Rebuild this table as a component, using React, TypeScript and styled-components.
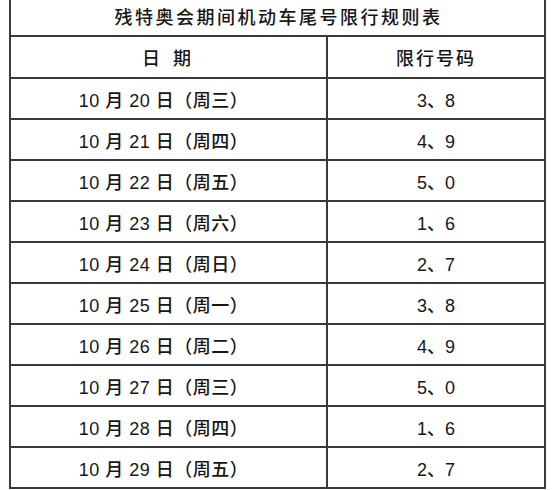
import React from 'react'
import styled, { createGlobalStyle } from 'styled-components'

const GlobalStyle = createGlobalStyle`
  html, body {
    margin: 0;
    padding: 0;
    background: #ffffff;
  }
  body {
    font-family: "Liberation Sans", "Noto Sans CJK SC", sans-serif;
    color: #161616;
  }
`

const lineColor = '#3a3a3a'

const Page = styled.div`
  width: 555px;
  height: 490px;
  overflow: hidden;
  padding-left: 9px;
  box-sizing: border-box;
`

const Table = styled.div`
  width: 537px;
  box-sizing: border-box;
  border-left: 2px solid ${lineColor};
  border-right: 2px solid ${lineColor};
  border-bottom: 2px solid ${lineColor};
  display: grid;
  grid-template-columns: 317px 1fr;
`

const Title = styled.div`
  grid-column: 1 / span 2;
  height: 35px;
  display: flex;
  align-items: center;
  justify-content: center;
  padding-bottom: 3px;
  box-sizing: border-box;
  font-size: 18px;
  font-weight: 500;
  letter-spacing: 2.5px;
  padding-left: 2px;
`

const Cell = styled.div<{ $left?: boolean; $h: number }>`
  height: ${(p) => p.$h}px;
  box-sizing: border-box;
  border-top: 2px solid ${lineColor};
  border-right: ${(p) => (p.$left ? `2px solid ${lineColor}` : 'none')};
  display: flex;
  align-items: center;
  justify-content: center;
  font-size: 18px;
  font-weight: 500;
  white-space: pre;
`

const HeadText = styled.span<{ $spread?: number }>`
  letter-spacing: ${(p) => p.$spread ?? 2}px;
`

const DateText = styled.span`
  margin-right: 10px;
  letter-spacing: 0.5px;
`

const rows: [string, string, string][] = [
  ['20', '三', '3、8'],
  ['21', '四', '4、9'],
  ['22', '五', '5、0'],
  ['23', '六', '1、6'],
  ['24', '日', '2、7'],
  ['25', '一', '3、8'],
  ['26', '二', '4、9'],
  ['27', '三', '5、0'],
  ['28', '四', '1、6'],
  ['29', '五', '2、7'],
]

const App: React.FC = () => {
  return (
    <Page>
      <GlobalStyle />
      <Table>
        <Title>残特奥会期间机动车尾号限行规则表</Title>
        <Cell $left $h={42}>
          <HeadText $spread={4}>日 期</HeadText>
        </Cell>
        <Cell $h={42}>
          <HeadText>限行号码</HeadText>
        </Cell>
        {rows.map(([day, week, nums]) => (
          <React.Fragment key={day}>
            <Cell $left $h={41}>
              <DateText>{`10 月 ${day} 日（周${week}）`}</DateText>
            </Cell>
            <Cell $h={41}>{nums}</Cell>
          </React.Fragment>
        ))}
      </Table>
    </Page>
  )
}

export default App
